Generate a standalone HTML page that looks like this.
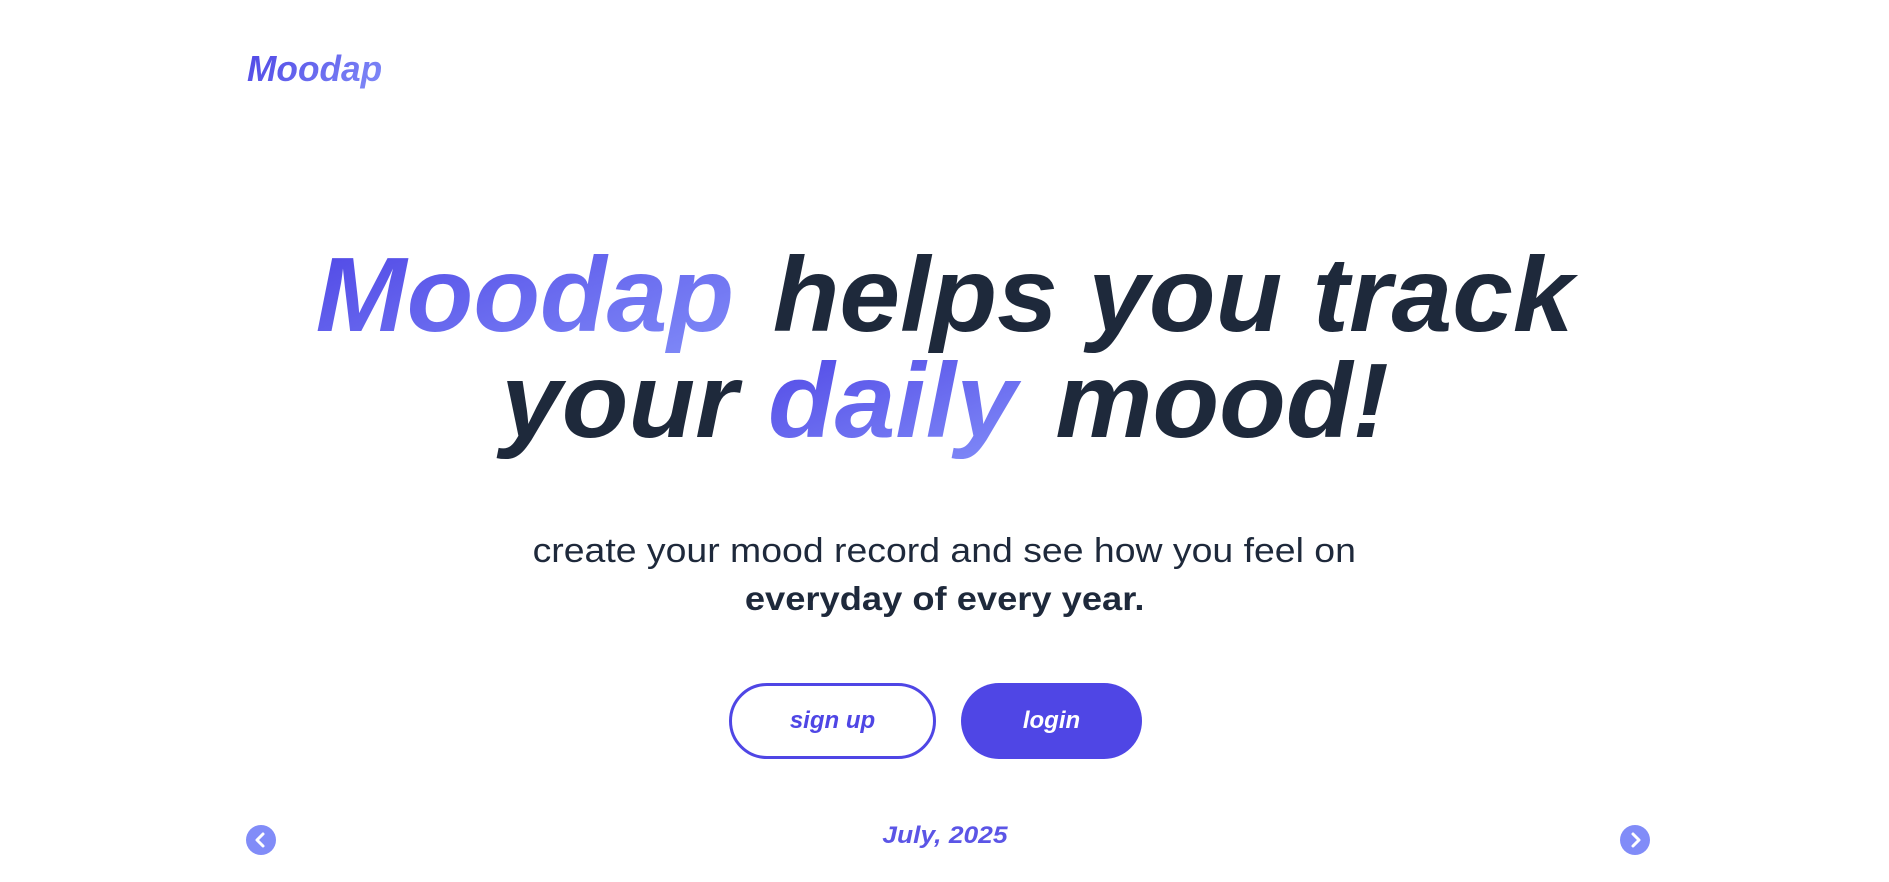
<!DOCTYPE html>
<html><head><meta charset="utf-8"><style>
html,body{margin:0;padding:0;background:#fff;width:1889px;height:882px;overflow:hidden;font-family:"Liberation Sans",sans-serif;position:relative}
.logo{position:absolute;left:247px;top:48px;font-size:36px;font-weight:bold;font-style:italic;color:#5b55e6;background:linear-gradient(135deg,#4f46e5,#818cf8);-webkit-background-clip:text;background-clip:text;-webkit-text-fill-color:transparent;transform:scaleX(.98);transform-origin:left}
.h{position:absolute;left:0;width:1889px;text-align:center;font-size:106px;font-weight:bold;font-style:italic;color:#1e293b;line-height:106px;white-space:nowrap}
.h span.in{display:inline-block;transform:scaleX(1.03)}
.g{background:linear-gradient(160deg,#4f46e5,#818cf8);-webkit-background-clip:text;background-clip:text;-webkit-text-fill-color:transparent;padding-right:8px}
.sub{position:absolute;left:0;width:1889px;text-align:center;font-size:34px;color:#1e293b;line-height:47px}
.sub span{display:inline-block;transform:scaleX(1.1)}
.btn{position:absolute;top:683px;height:76px;border-radius:38px;box-sizing:border-box;font-size:24px;font-weight:bold;font-style:italic;display:flex;align-items:center;justify-content:center}
.date{position:absolute;left:0;width:1889px;top:822px;text-align:center;font-size:24px;font-weight:bold;font-style:italic;color:#5b55e6}
.date span{display:inline-block;transform:scaleX(1.1)}
.arr{position:absolute;top:825px;width:30px;height:30px;border-radius:50%;background:#818cf8}
</style></head><body>
<div class="logo">Moodap</div>
<div class="h" style="top:242px"><span class="in"><span class="g">Moodap</span> helps you track</span></div>
<div class="h" style="top:348px"><span class="in">your <span class="g">daily</span> mood!</span></div>
<div class="sub" style="top:528px"><span>create your mood record and see how you feel on</span></div>
<div class="sub" style="top:575px;font-weight:bold;font-size:33px"><span>everyday of every year.</span></div>
<div class="btn" style="left:729px;width:207px;border:3px solid #4f46e5;color:#4f46e5">sign up</div>
<div class="btn" style="left:961px;width:181px;background:#4f46e5;color:#fff">login</div>
<div class="date"><span>July, 2025</span></div>
<div class="arr" style="left:246px"><svg width="30" height="30"><path d="M17 9 L11 15 L17 21" stroke="#fff" stroke-width="3" fill="none" stroke-linecap="round" stroke-linejoin="round"/></svg></div>
<div class="arr" style="left:1620px"><svg width="30" height="30"><path d="M13 9 L19 15 L13 21" stroke="#fff" stroke-width="3" fill="none" stroke-linecap="round" stroke-linejoin="round"/></svg></div>
</body></html>
